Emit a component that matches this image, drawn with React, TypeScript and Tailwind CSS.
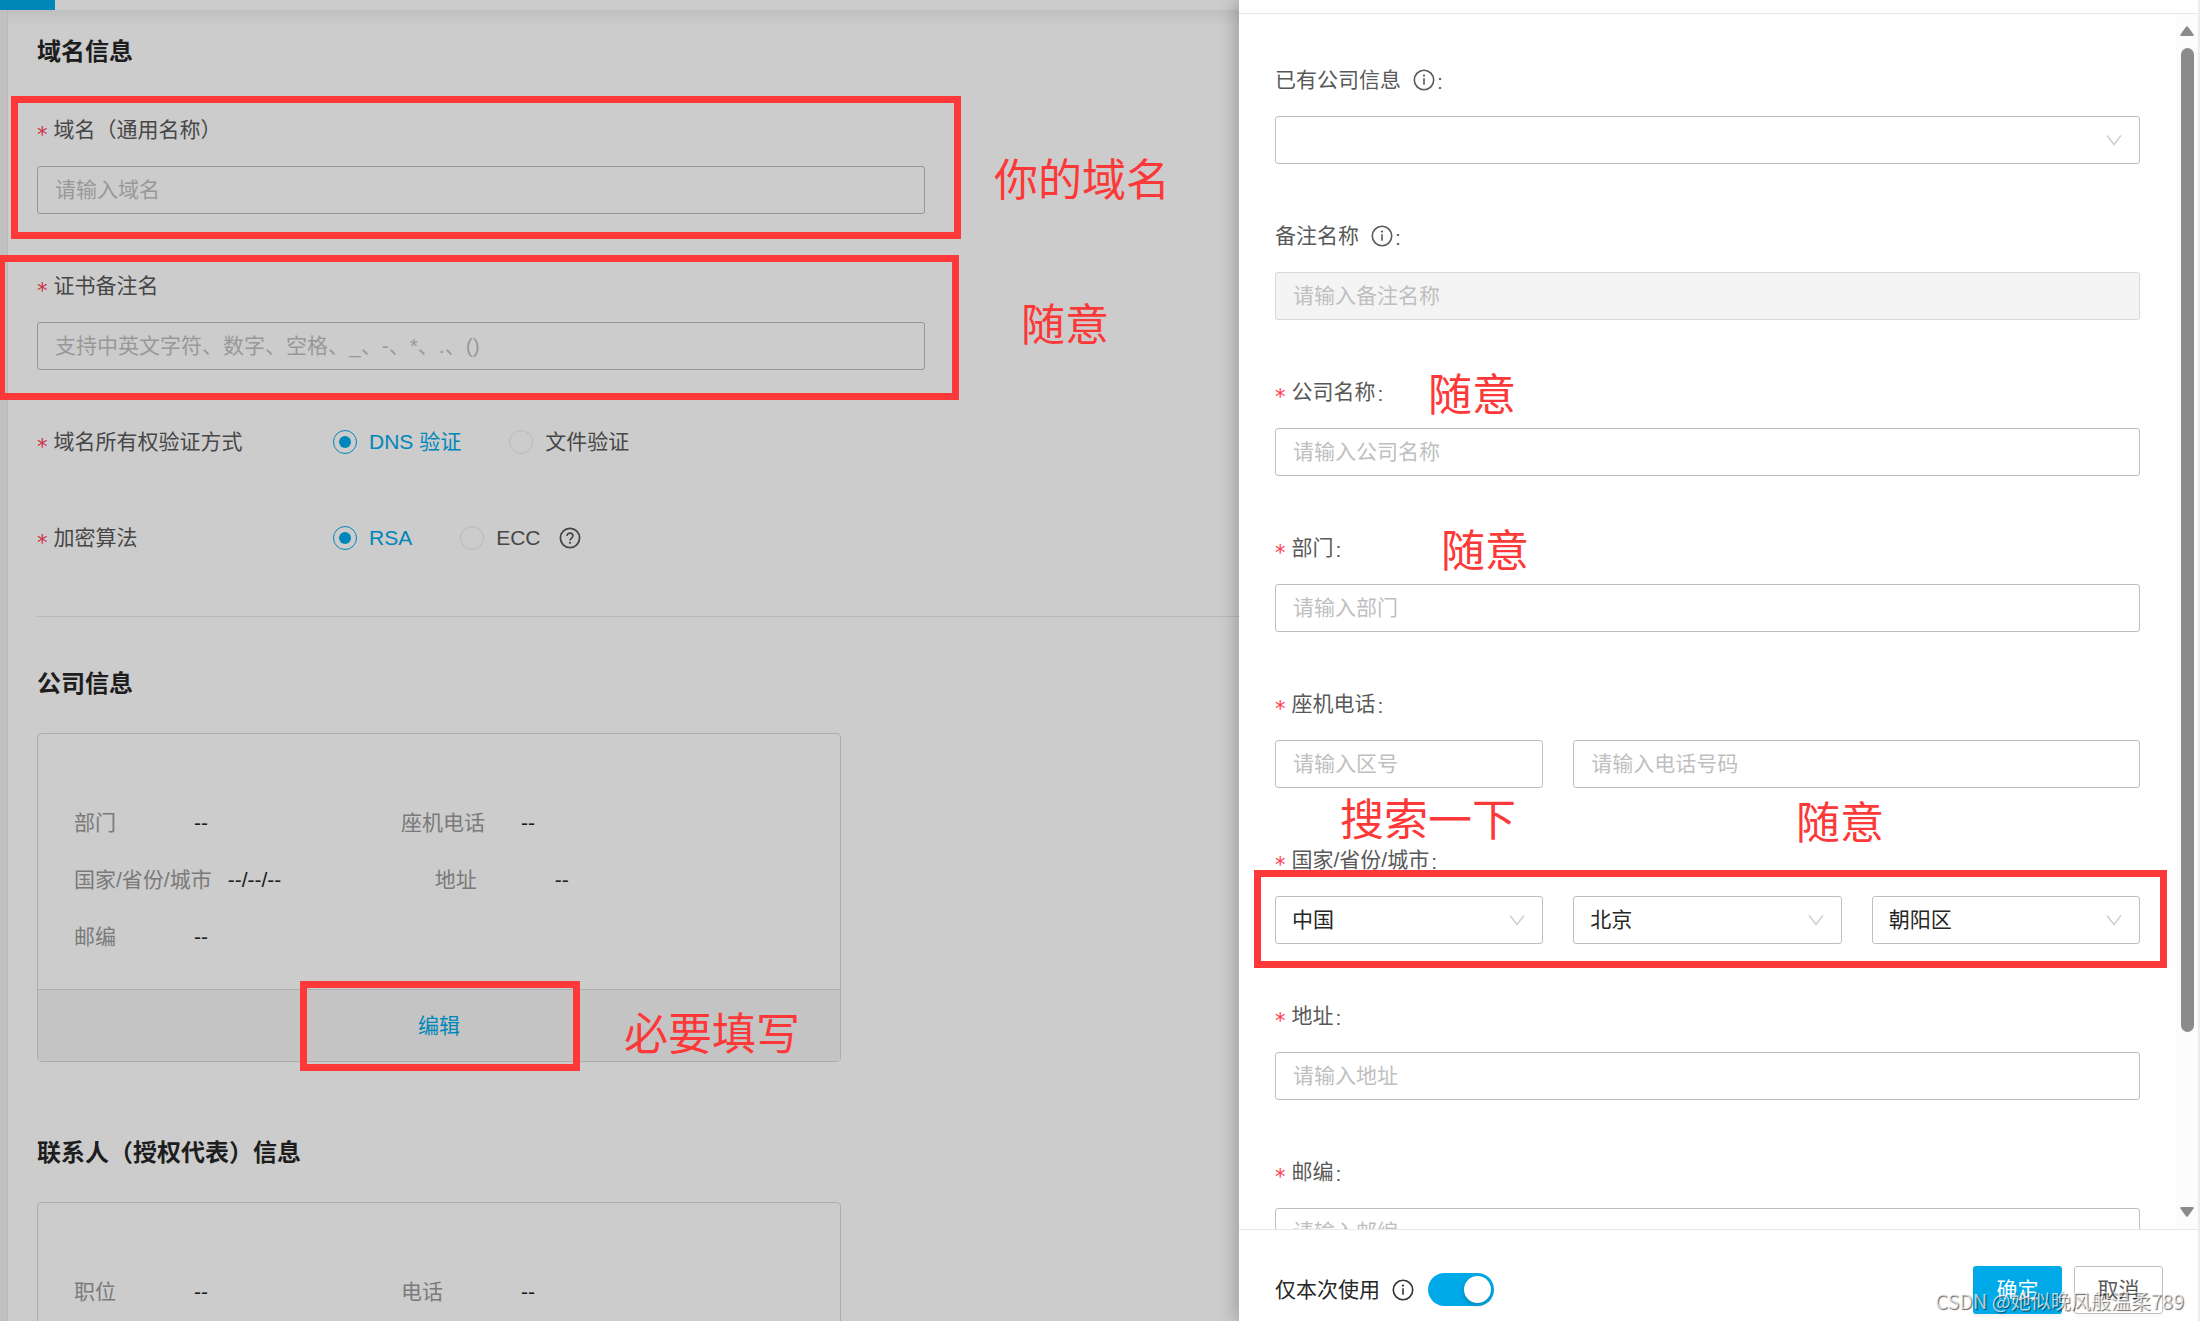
import { useId, useState } from 'react';
import type { ReactNode } from 'react';

const companyRows = [
  [{ label: '部门', value: '--' }, { label: '座机电话', value: '--' }],
  [{ label: '国家/省份/城市', value: '--/--/--' }, { label: '地址', value: '--' }],
  [{ label: '邮编', value: '--' }],
];

const contactRows = [
  [{ label: '职位', value: '--' }, { label: '电话', value: '--' }],
];

function Star() {
  return <span className="mr-[6px] pt-[10px] font-['DejaVu_Sans',sans-serif] text-[#ff3b4e]" aria-hidden="true">*</span>;
}

function InfoIcon() {
  return (
    <svg className="h-[22px] w-[22px]" viewBox="0 0 22 22" fill="none" stroke="currentColor">
      <circle cx="11" cy="11" r="9.7" strokeWidth="1.6" />
      <path d="M11 9.2v6.6" strokeWidth="1.6" />
      <circle cx="11" cy="6.6" r="1.1" fill="currentColor" stroke="none" />
    </svg>
  );
}

function HelpIcon() {
  return (
    <svg className="h-[22px] w-[22px]" viewBox="0 0 22 22" fill="none" stroke="currentColor">
      <circle cx="11" cy="11" r="9.6" strokeWidth="1.8" />
      <path d="M8 9c0-1.8 1.3-2.9 3-2.9s3 1.1 3 2.7c0 2.2-3 2.3-3 4.6" strokeWidth="1.6" />
      <circle cx="11" cy="15.8" r="1.1" fill="currentColor" stroke="none" />
    </svg>
  );
}

function TextInput({ id, placeholder, disabled, label }: { id?: string; placeholder: string; disabled?: boolean; label?: string }) {
  return (
    <input
      id={id}
      type="text"
      aria-label={label}
      placeholder={placeholder}
      disabled={disabled}
      className="block h-12 w-full min-w-0 rounded-[3px] border border-[#bfbfbf] bg-white px-[17px] text-[21px] text-[#262626] outline-none placeholder:text-[#bfbfbf] placeholder:opacity-100 disabled:border-[#d9d9d9] disabled:bg-[#f4f4f4]"
    />
  );
}

function SelectBox({ id, options, label }: { id?: string; options: string[]; label?: string }) {
  return (
    <div className="relative w-full">
      <select
        id={id}
        aria-label={label}
        className="block h-12 w-full appearance-none rounded-[3px] border border-[#bfbfbf] bg-white px-4 text-[21px] text-[#262626] outline-none"
      >
        {options.map((option) => (
          <option key={option}>{option}</option>
        ))}
      </select>
      <svg className="pointer-events-none absolute top-4 right-4 h-4 w-5" viewBox="0 0 20 16" fill="none" stroke="#cfcfcf" strokeWidth="1.5">
        <path d="M3 3.5 10 12.5 17 3.5" />
      </svg>
    </div>
  );
}

function Field({ label, required, info, colon, children }: {
  label: string;
  required?: boolean;
  info?: boolean;
  colon?: boolean;
  children: (id: string) => ReactNode;
}) {
  const id = useId();
  return (
    <div>
      <label htmlFor={id} className="mb-5 flex h-8 items-center leading-8 text-[#595959]">
        {required && <Star />}
        {label}
        {info && <span className="ml-3"><InfoIcon /></span>}
        {colon && <span className="ml-[2px] pt-1">:</span>}
      </label>
      {children(id)}
    </div>
  );
}

function RadioRow({ title, name, options, help }: { title: string; name: string; options: string[]; help?: boolean }) {
  const [picked, setPicked] = useState(options[0]);
  return (
    <fieldset className="flex h-8 items-center">
      <legend className="float-left flex h-8 w-[296px] items-center leading-8 text-[#595959]">
        <Star />
        {title}
      </legend>
      <div className="flex items-center gap-12">
        {options.map((option) => (
          <label key={option} className="flex items-center gap-3 leading-8 text-[#595959] has-checked:text-[#00a9e8]">
            <input
              type="radio"
              name={name}
              checked={picked === option}
              onChange={() => setPicked(option)}
              className="grid h-6 w-6 appearance-none place-content-center rounded-full border border-[#e8e8e8] checked:border-[#00a9e8] checked:before:h-3 checked:before:w-3 checked:before:rounded-full checked:before:bg-[#00a9e8] checked:before:content-['']"
            />
            {option}
          </label>
        ))}
      </div>
      {help && <span className="ml-[18px] text-[#595959]"><HelpIcon /></span>}
    </fieldset>
  );
}

function InfoCard({ rows, editable }: { rows: { label: string; value: string }[][]; editable?: boolean }) {
  return (
    <div className="mt-[33px] w-full max-w-[804px] rounded-[4px] border border-[#d9d9d9]">
      <dl className="flex flex-col gap-[25px] px-9 pt-[73px] pb-9">
        {rows.map((row, i) => (
          <div key={i} className="flex leading-8">
            {row.map((item) => (
              <div key={item.label} className="flex shrink-0">
                <dt className="mr-4 min-w-[104px] text-[#999]">{item.label}</dt>
                <dd className="w-[207px] text-[#262626]">{item.value}</dd>
              </div>
            ))}
          </div>
        ))}
      </dl>
      {editable && (
        <div className="flex h-[72px] items-center justify-center border-t border-[#d9d9d9] bg-[#f6f6f6]">
          <button type="button" className="text-[#00a9e8]">编辑</button>
        </div>
      )}
    </div>
  );
}

function Note({ className, children }: { className: string; children: string }) {
  return <span className={`absolute text-[44px] leading-[48px] whitespace-nowrap text-[#fc3938] ${className}`}>{children}</span>;
}

function Frame({ className }: { className: string }) {
  return <div className={`absolute border-[7px] border-[#fc3938] ${className}`} />;
}

function Drawer() {
  return (
    <aside className="absolute inset-y-0 right-0 z-20 flex w-[961px] max-w-full flex-col border-r-2 border-[#ececec] bg-white shadow-[-4px_0_16px_rgba(0,0,0,0.22)]">
      <div className="h-[14px] shrink-0 border-b border-[#e8e8e8]" />
      <div className="flex min-h-0 flex-1 overflow-hidden">
        <form className="flex min-w-0 flex-1 flex-col gap-14 px-9 pt-[50px]">
          <Field label="已有公司信息" info colon>{(id) => <SelectBox id={id} options={['']} />}</Field>
          <Field label="备注名称" info colon>{(id) => <TextInput id={id} placeholder="请输入备注名称" disabled />}</Field>
          <Field label="公司名称" required colon>{(id) => <TextInput id={id} placeholder="请输入公司名称" />}</Field>
          <Field label="部门" required colon>{(id) => <TextInput id={id} placeholder="请输入部门" />}</Field>
          <Field label="座机电话" required colon>
            {(id) => (
              <div className="grid grid-cols-3 gap-[30px]">
                <TextInput id={id} placeholder="请输入区号" />
                <div className="col-span-2"><TextInput label="电话号码" placeholder="请输入电话号码" /></div>
              </div>
            )}
          </Field>
          <Field label="国家/省份/城市" required colon>
            {(id) => (
              <div className="grid grid-cols-3 gap-[30px]">
                <SelectBox id={id} options={['中国']} />
                <SelectBox label="省份" options={['北京']} />
                <SelectBox label="城市" options={['朝阳区']} />
              </div>
            )}
          </Field>
          <Field label="地址" required colon>{(id) => <TextInput id={id} placeholder="请输入地址" />}</Field>
          <Field label="邮编" required colon>{(id) => <TextInput id={id} placeholder="请输入邮编" />}</Field>
        </form>
        <div className="flex w-[22px] shrink-0 flex-col items-center bg-[#fcfcfc] py-3">
          <svg className="h-[10px] w-[14px] shrink-0" viewBox="0 0 14 10" fill="#8b8b8b"><path d="M6 .8Q7 -.4 8 .8L13.6 8.4Q14 10 12.6 10H1.4Q0 10 .4 8.4Z" /></svg>
          <div className="mt-3 h-[984px] w-[13px] rounded-full bg-[#8b8b8b]" />
          <svg className="mt-auto h-[10px] w-[14px] shrink-0" viewBox="0 0 14 10" fill="#8b8b8b"><path d="M6 9.2Q7 10.4 8 9.2L13.6 1.6Q14 0 12.6 0H1.4Q0 0 .4 1.6Z" /></svg>
        </div>
      </div>
      <div className="flex h-[92px] shrink-0 items-center border-t border-[#e8e8e8] pt-7 pr-[35px] pl-9">
        <label htmlFor="only-once" className="text-[#262626]">仅本次使用</label>
        <span className="ml-3 text-[#333]"><InfoIcon /></span>
        <input
          id="only-once"
          type="checkbox"
          role="switch"
          defaultChecked
          className="ml-[14px] flex h-[33px] w-[66px] appearance-none items-center rounded-full bg-[#bfbfbf] px-[3px] before:h-[27px] before:w-[27px] before:rounded-full before:bg-white before:shadow-[0_2px_5px_rgba(0,35,11,0.25)] before:content-[''] checked:justify-end checked:bg-[#00a9e8]"
        />
        <div className="ml-auto flex gap-3">
          <button type="button" className="h-12 w-[89px] rounded-[3px] bg-[#00a9e8] text-white shadow-[0_3px_0_rgba(0,0,0,0.04)]">确定</button>
          <button type="button" className="h-12 w-[89px] rounded-[3px] border border-[#bfbfbf] text-[#595959] shadow-[0_3px_0_rgba(0,0,0,0.02)]">取消</button>
        </div>
      </div>

      <Note className="top-[372px] left-[189px]">随意</Note>
      <Note className="top-[528px] left-[202px]">随意</Note>
      <Note className="top-[797px] left-[101px]">搜索一下</Note>
      <Note className="top-[800px] left-[557px]">随意</Note>
      <Frame className="top-[870px] right-[31px] left-[15px] h-[98px]" />
      <span className="absolute right-[14px] bottom-[6px] font-['Noto_Sans_CJK_SC',sans-serif] text-[20px] leading-7 whitespace-nowrap text-white/70 [text-shadow:1px_1px_1px_rgba(0,0,0,0.6)]">
        CSDN @她似晚风般温柔789
      </span>
    </aside>
  );
}

export default function App() {
  return (
    <div className="relative h-screen overflow-hidden bg-white font-['Liberation_Sans','Noto_Sans_CJK_SC',sans-serif] text-[21px]">
      <header className="h-[10px]">
        <div className="h-full w-[55px] bg-[#00a9e8]" />
      </header>
      <div className="bg-[#f2f2f2] pl-[7px]">
        <main className="border-l border-[#e8e8e8] bg-white bg-linear-to-b from-[#f0f0f0] to-white bg-[length:100%_16px] bg-no-repeat pb-20 pl-[29px]">
          <section className="border-b border-[#e8e8e8] pt-[26px] pb-[62px]">
            <h2 className="mb-[46px] text-2xl leading-8 font-bold text-[#262626]">域名信息</h2>
            <div className="mb-14 flex max-w-[888px] flex-col gap-14">
              <Field label="域名（通用名称）" required>{(id) => <TextInput id={id} placeholder="请输入域名" />}</Field>
              <Field label="证书备注名" required>{(id) => <TextInput id={id} placeholder="支持中英文字符、数字、空格、_、-、*、.、()" />}</Field>
            </div>
            <div className="flex flex-col gap-16">
              <RadioRow title="域名所有权验证方式" name="verify" options={['DNS 验证', '文件验证']} />
              <RadioRow title="加密算法" name="algorithm" options={['RSA', 'ECC']} help />
            </div>
          </section>
          <section className="pt-[51px]">
            <h2 className="text-2xl leading-8 font-bold text-[#262626]">公司信息</h2>
            <InfoCard rows={companyRows} editable />
          </section>
          <section className="pt-[75px]">
            <h2 className="text-2xl leading-8 font-bold text-[#262626]">联系人（授权代表）信息</h2>
            <InfoCard rows={contactRows} />
          </section>
        </main>
      </div>

      <div className="absolute inset-0 bg-black/20" />

      <Frame className="top-24 left-[11px] h-[143px] w-[950px]" />
      <Frame className="top-[255px] -left-[2px] h-[145px] w-[961px]" />
      <Frame className="top-[981px] left-[300px] h-[90px] w-[280px]" />
      <Note className="top-[157px] left-[994px]">你的域名</Note>
      <Note className="top-[302px] left-[1021px]">随意</Note>
      <Note className="top-[1011px] left-[624px]">必要填写</Note>

      <Drawer />
    </div>
  );
}
